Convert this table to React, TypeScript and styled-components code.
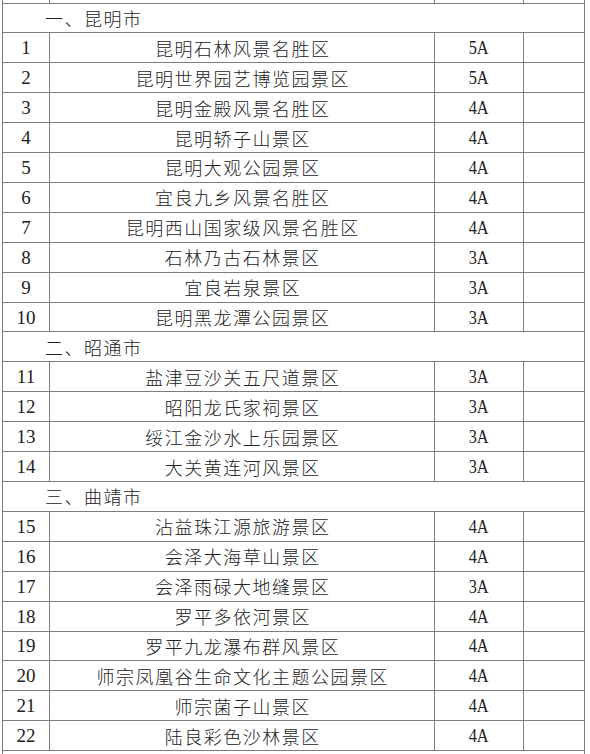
import React from "react";
import styled, { createGlobalStyle } from "styled-components";

const Global = createGlobalStyle`
  html, body { margin: 0; padding: 0; background: #ffffff; }
  body { width: 590px; height: 754px; overflow: hidden; }
`;

type Item = { n: number; name: string; grade: string };
type Section = { title: string; items: Item[] };

const sections: Section[] = [
  {
    title: "一、昆明市",
    items: [
      { n: 1, name: "昆明石林风景名胜区", grade: "5A" },
      { n: 2, name: "昆明世界园艺博览园景区", grade: "5A" },
      { n: 3, name: "昆明金殿风景名胜区", grade: "4A" },
      { n: 4, name: "昆明轿子山景区", grade: "4A" },
      { n: 5, name: "昆明大观公园景区", grade: "4A" },
      { n: 6, name: "宜良九乡风景名胜区", grade: "4A" },
      { n: 7, name: "昆明西山国家级风景名胜区", grade: "4A" },
      { n: 8, name: "石林乃古石林景区", grade: "3A" },
      { n: 9, name: "宜良岩泉景区", grade: "3A" },
      { n: 10, name: "昆明黑龙潭公园景区", grade: "3A" },
    ],
  },
  {
    title: "二、昭通市",
    items: [
      { n: 11, name: "盐津豆沙关五尺道景区", grade: "3A" },
      { n: 12, name: "昭阳龙氏家祠景区", grade: "3A" },
      { n: 13, name: "绥江金沙水上乐园景区", grade: "3A" },
      { n: 14, name: "大关黄连河风景区", grade: "3A" },
    ],
  },
  {
    title: "三、曲靖市",
    items: [
      { n: 15, name: "沾益珠江源旅游景区", grade: "4A" },
      { n: 16, name: "会泽大海草山景区", grade: "4A" },
      { n: 17, name: "会泽雨碌大地缝景区", grade: "3A" },
      { n: 18, name: "罗平多依河景区", grade: "4A" },
      { n: 19, name: "罗平九龙瀑布群风景区", grade: "4A" },
      { n: 20, name: "师宗凤凰谷生命文化主题公园景区", grade: "4A" },
      { n: 21, name: "师宗菌子山景区", grade: "4A" },
      { n: 22, name: "陆良彩色沙林景区", grade: "4A" },
    ],
  },
];

const LINE = "1px solid #7c7c7c";

const Page = styled.div`
  padding-left: 2px;
`;

const Table = styled.table`
  border-collapse: collapse;
  table-layout: fixed;
  width: 583px;
  color: #222;
`;

const Row = styled.tr<{ $h: number }>`
  height: ${(p) => p.$h}px;
`;

const Cell = styled.td`
  border: ${LINE};
  padding: 0;
  text-align: center;
  vertical-align: middle;
  white-space: nowrap;
  overflow: hidden;
`;

const EdgeCell = styled(Cell)<{ $top?: boolean }>`
  ${(p) => (p.$top ? "border-top: none;" : "border-bottom: none;")}
  line-height: 0;
  font-size: 0;
`;

const NumCell = styled(Cell)`
  font-family: "Liberation Serif", "Times New Roman", serif;
  font-size: 19px;
  line-height: 1;
`;

const NameCell = styled(Cell)`
  font-family: "Noto Sans CJK SC", "Noto Sans", sans-serif;
  font-size: 18px;
  font-weight: 300;
  letter-spacing: 1.5px;
  padding-left: 1.5px;
  line-height: 1;
`;

const SectionCell = styled(Cell)`
  text-align: left;
  padding-left: 42px;
  font-family: "Noto Sans CJK SC", "Noto Sans", sans-serif;
  font-size: 18px;
  font-weight: 300;
  letter-spacing: 1.5px;
  line-height: 1;
`;

const GradeCell = styled(Cell)`
  font-family: "Liberation Serif", "Times New Roman", serif;
  font-size: 19px;
  line-height: 1;
`;

const Grade = styled.span`
  display: inline-block;
  transform: scaleX(0.86);
`;

const ROW_H = 29.92;

export default function App() {
  return (
    <>
      <Global />
      <Page>
        <Table>
          <colgroup>
            <col style={{ width: 47 }} />
            <col style={{ width: 385 }} />
            <col style={{ width: 89 }} />
            <col style={{ width: 61 }} />
          </colgroup>
          <tbody>
            <Row $h={3}>
              <EdgeCell $top />
              <EdgeCell $top />
              <EdgeCell $top />
              <EdgeCell $top />
            </Row>
            {sections.map((s) => (
              <React.Fragment key={s.title}>
                <Row $h={ROW_H}>
                  <SectionCell colSpan={4}>{s.title}</SectionCell>
                </Row>
                {s.items.map((it) => (
                  <Row $h={ROW_H} key={it.n}>
                    <NumCell>{it.n}</NumCell>
                    <NameCell>{it.name}</NameCell>
                    <GradeCell>
                      <Grade>{it.grade}</Grade>
                    </GradeCell>
                    <Cell />
                  </Row>
                ))}
              </React.Fragment>
            ))}
            <Row $h={10}>
              <EdgeCell colSpan={4} />
            </Row>
          </tbody>
        </Table>
      </Page>
    </>
  );
}
